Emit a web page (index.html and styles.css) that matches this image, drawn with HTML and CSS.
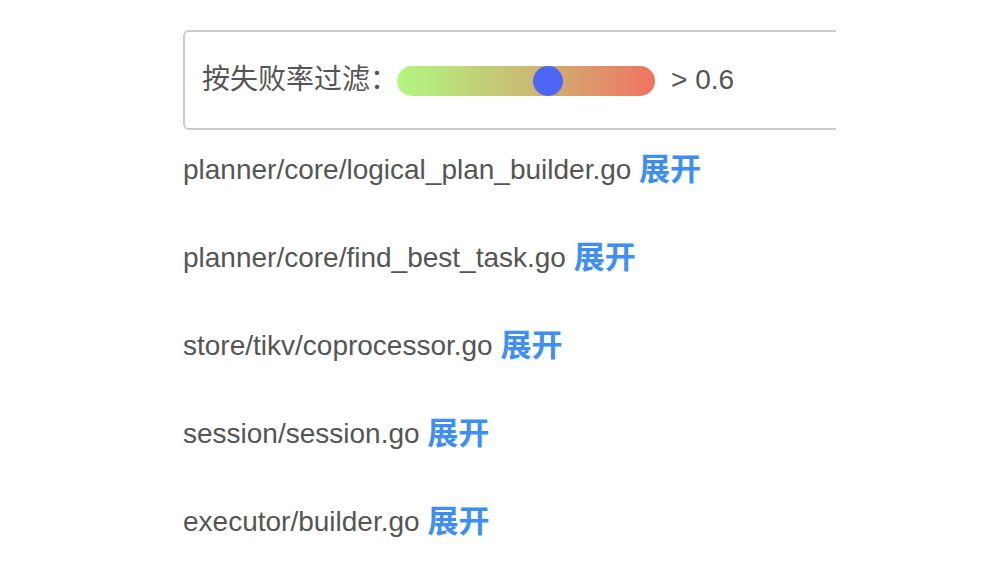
FILE: index.html
```html
<!DOCTYPE html>
<html lang="zh">
<head>
<meta charset="utf-8">
<link rel="stylesheet" href="styles.css">
</head>
<body>
<div class="page">
  <div class="filter">
    <span class="label">按失败率过滤：</span>
    <div class="track"><div class="thumb" style="left:136px"></div></div>
    <span class="value">&gt; 0.6</span>
  </div>
  <ul class="files">
    <li>planner/core/logical_plan_builder.go <a class="toggle">展开</a></li>
    <li>planner/core/find_best_task.go <a class="toggle">展开</a></li>
    <li>store/tikv/coprocessor.go <a class="toggle">展开</a></li>
    <li>session/session.go <a class="toggle">展开</a></li>
    <li>executor/builder.go <a class="toggle">展开</a></li>
  </ul>
</div>
</body>
</html>
```
FILE: styles.css
```css
html, body {
  margin: 0;
  padding: 0;
  background: #fff;
}
body {
  font-family: "Liberation Sans", "Noto Sans CJK SC", sans-serif;
  color: #555;
  font-size: 28px;
}
.page {
  margin-left: 183px;
  width: 653px;
  padding-top: 30px;
  overflow: hidden;
}
.filter {
  width: 720px;
  height: 96px;
  border: 2px solid #ccc;
  border-radius: 6px;
  display: flex;
  align-items: center;
  padding-left: 17px;
  box-sizing: content-box;
}
.label {
  font-size: 28px;
  line-height: 40px;
}
.track {
  position: relative;
  width: 258px;
  height: 30px;
  border-radius: 15px;
  background: linear-gradient(to right, #b1f781, #cbbb73 50%, #f07262);
  margin-left: -1px;
  margin-top: 2px;
}
.thumb {
  position: absolute;
  top: 0;
  width: 30px;
  height: 30px;
  border-radius: 50%;
  background: #4b66f8;
}
.value {
  margin-left: 16px;
  line-height: 40px;
}
.files {
  list-style: none;
  margin: 20px 0 0;
  padding: 0;
  display: flex;
  flex-direction: column;
  gap: 48px;
}
.files li {
  height: 40px;
  line-height: 40px;
  white-space: nowrap;
}
.toggle {
  color: #3d8ef5;
  font-size: 31px;
  font-weight: bold;
  line-height: 40px;
  vertical-align: top;
  cursor: pointer;
}
```
